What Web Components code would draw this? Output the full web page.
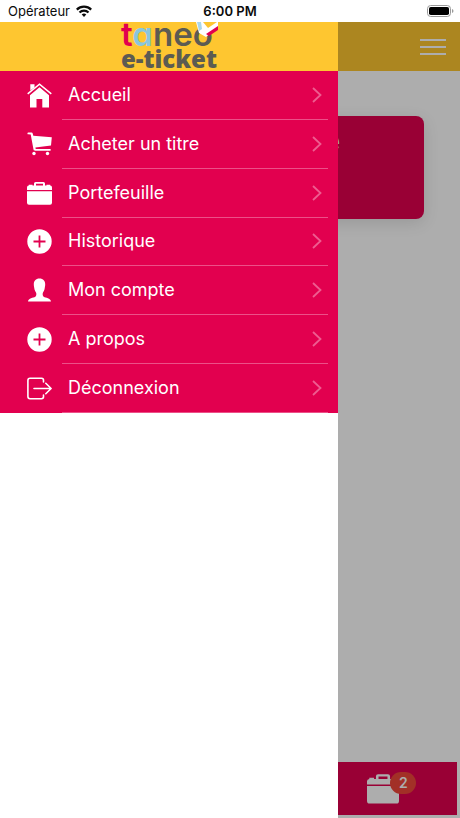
<!DOCTYPE html>
<html lang="fr">
<head>
<meta charset="utf-8">
<meta name="viewport" content="width=device-width, initial-scale=1">
<title>Taneo e-ticket</title>
<style>
  html, body {
    height: 100%;
    margin: 0;
  }
  body {
    font-family: Inter, "Liberation Sans", sans-serif;
    background: #ffffff;
    --brand: #e2004f;
    --yellow: #fec630;
    --ink: #5c5b52;
  }
</style>
</head>
<body>
<ticket-app>
  <status-bar slot="status" carrier="Opérateur" time="6:00 PM"></status-bar>
  <home-page slot="page"></home-page>
  <side-menu slot="menu">
    <menu-item icon="home">Accueil</menu-item>
    <menu-item icon="cart">Acheter un titre</menu-item>
    <menu-item icon="case">Portefeuille</menu-item>
    <menu-item icon="plus">Historique</menu-item>
    <menu-item icon="user">Mon compte</menu-item>
    <menu-item icon="plus">A propos</menu-item>
    <menu-item icon="exit">Déconnexion</menu-item>
  </side-menu>
</ticket-app>

<script>
const ICONS = {
  home: `<path fill="currentColor" d="M12.500 4.200 22 12.200V24.500h-6.700v-8.400h-5.800v8.400H3V12.200z"/>
    <path fill="currentColor" d="M3.300 7.500V1.300h4.200v3.100z"/>
    <path fill="none" stroke="currentColor" stroke-width="1.500" d="M.7 10.900 12.500 1.100l11.800 9.800"/>`,
  cart: `<path fill="currentColor" d="M.4 1.400C.4.800.8.600 1.300.600h3.200c.7 0 1.100.4 1.300 1.100l.5 2.100 18.500 1.400-.8 8.300-15.600 2.100.3 1.400h14.500c.8 0 .8 1.800 0 1.800H8c-.9 0-1.300-.4-1.500-1.200L3.700 2.500l-2.400-.2c-.6 0-.9-.4-.9-.9z"/>
    <circle cx="7" cy="21.500" r="1.700" fill="currentColor"/><circle cx="20.500" cy="21.500" r="1.700" fill="currentColor"/>`,
  case: `<path fill="currentColor" d="M0 9V6.500Q0 4.800 1.800 4.600V3.800h3.700v.8H7V2.600Q7 1 8.600 1h7.800Q18 1 18 2.600v2h1.500v-.8h3.700v.8Q25 4.800 25 6.500V9zM9 4.600h7V2.800H9z" fill-rule="evenodd"/>
    <path fill="currentColor" d="M0 10.200h25v11.600q0 2-2 2H2q-2 0-2-2z"/>`,
  plus: `<path fill="currentColor" fill-rule="evenodd" d="M12.500.3a12.200 12.200 0 1 0 0 24.400 12.200 12.200 0 0 0 0-24.400zM11.600 6.500h1.800v5.100h5.100v1.800h-5.100v5.100h-1.800v-5.100H6.500v-1.800h5.100z"/>`,
  user: `<path fill="currentColor" d="M12.500.6c3.800 0 5.700 2.400 5.700 5.800 0 1.300-.3 2-.4 3.400-.2 2.800-1.600 3.800-2 5.200-.3 1.400-.2 3 .9 3.700 2 1.200 6.900 1 7.300 4.900H1c.4-3.900 5.300-3.700 7.300-4.900 1.100-.7 1.200-2.300.9-3.700-.4-1.400-1.800-2.400-2-5.200-.1-1.400-.4-2.100-.4-3.400C6.800 3 8.700.6 12.500.6z"/>`,
  exit: `<path fill="none" stroke="currentColor" stroke-width="1.600" stroke-linecap="round" stroke-linejoin="round" d="M16.500 6V4.200q0-1.900-2-1.900H3Q.9 2.300.9 4.400v16.200q0 2.100 2.100 2.100h11.500q2 0 2-1.900V19M7 12.500h17M18.800 7.300l5.300 5.200-5.300 5.200"/>`
};

const drawIcon = (name) => `<svg viewBox="0 0 25 25" width="25" height="25" aria-hidden="true">${ICONS[name]}</svg>`;

class TicketApp extends HTMLElement {
  connectedCallback() {
    this.attachShadow({ mode: 'open' });
    this.shadowRoot.innerHTML = `
      <style>
        :host {
          display: flex;
          flex-direction: column;
          height: 100vh;
          overflow: hidden;
        }
        .stage {
          position: relative;
          flex: 1;
          min-height: 0;
          display: flex;
        }
        .page {
          flex: 1;
          display: flex;
        }
        .backdrop {
          position: absolute;
          inset: 0;
          background: rgba(0, 0, 0, 0.32);
        }
        .drawer {
          position: absolute;
          top: 0;
          bottom: 0;
          left: 0;
          display: flex;
          width: 338px;
          max-width: 80%;
        }
      </style>
      <slot name="status"></slot>
      <div class="stage">
        <div class="page"><slot name="page"></slot></div>
        <div class="backdrop"></div>
        <div class="drawer"><slot name="menu"></slot></div>
      </div>
    `;
  }
}

class StatusBar extends HTMLElement {
  connectedCallback() {
    this.attachShadow({ mode: 'open' });
    this.shadowRoot.innerHTML = `
      <style>
        :host {
          display: grid;
          grid-template-columns: 1fr auto 1fr;
          align-items: center;
          height: 22px;
          padding: 0 6px;
          background: #ffffff;
          color: #0b0b0b;
          font-size: 13px;
          line-height: 22px;
        }
        .left {
          display: flex;
          align-items: center;
          gap: 6px;
          padding-left: 2px;
        }
        .time {
          font-weight: 600;
        }
        .battery {
          justify-self: end;
        }
        svg {
          display: block;
        }
      </style>
      <div class="left">
        <span>${this.getAttribute('carrier')}</span>
        <svg width="16" height="12" viewBox="0 0 16 12" fill="none" stroke="#0b0b0b" aria-hidden="true">
          <path stroke-width="2.200" d="M.8 4.600a10.300 10.300 0 0 1 14.400 0"/>
          <path stroke-width="2.200" d="M3.500 7.500a6.400 6.400 0 0 1 9 0"/>
          <path fill="#0b0b0b" stroke="none" d="M5.700 9.500a3.300 3.300 0 0 1 4.600 0L8 11.900z"/>
        </svg>
      </div>
      <span class="time">${this.getAttribute('time')}</span>
      <svg class="battery" width="27" height="12" viewBox="0 0 27 12" aria-hidden="true">
        <rect x=".5" y=".5" width="23" height="11" rx="3.200" fill="none" stroke="#9a9a9a"/>
        <rect x="2" y="2" width="20" height="8" rx="1.800" fill="#000"/>
        <path d="M25 4v4q1.500-.6 1.500-2T25 4z" fill="#9a9a9a"/>
      </svg>
    `;
  }
}

class HomePage extends HTMLElement {
  connectedCallback() {
    this.attachShadow({ mode: 'open' });
    this.shadowRoot.innerHTML = `
      <style>
        :host {
          flex: 1;
          display: flex;
          flex-direction: column;
          background: #ffffff;
        }
        header {
          display: flex;
          justify-content: flex-end;
          align-items: center;
          height: 49px;
          padding-right: 14px;
          background: var(--yellow);
        }
        header button {
          display: grid;
          gap: 5px;
          width: 26px;
          padding: 0;
          border: 0;
          background: none;
        }
        header button i {
          height: 2px;
          background: #ffffff;
        }
        main {
          flex: 1;
          padding: 45px 36px;
        }
        .card {
          box-sizing: border-box;
          min-height: 103px;
          padding: 8px 0;
          border-radius: 8px;
          background: var(--brand);
          color: #ffffff;
          text-align: center;
          box-shadow: 0 4px 16px rgba(0, 0, 0, 0.12);
        }
        h2 {
          margin: 0;
          font-size: 29px;
          line-height: 34px;
          font-weight: 700;
        }
        nav {
          display: grid;
          grid-template-columns: repeat(3, 1fr);
          margin: 0 3px 3px;
          padding-left: 12px;
          background: var(--brand);
        }
        nav a {
          display: flex;
          justify-content: center;
          align-items: center;
          height: 53px;
          color: #ffffff;
        }
        .tab {
          position: relative;
          display: flex;
        }
        .tab svg {
          width: 32px;
          height: 32px;
        }
        .badge {
          position: absolute;
          top: -1px;
          left: 23px;
          width: 26px;
          border-radius: 11px;
          background: #ef473a;
          font-size: 14px;
          line-height: 22px;
          font-weight: 600;
          text-align: center;
        }
      </style>
      <header>
        <button type="button" aria-label="Menu"><i></i><i></i><i></i></button>
      </header>
      <main>
        <section class="card"><h2>Acheter un titre</h2></section>
      </main>
      <nav>
        <a href="#accueil" aria-label="Accueil"><span class="tab">${drawIcon('home')}</span></a>
        <a href="#acheter" aria-label="Acheter un titre"><span class="tab">${drawIcon('cart')}</span></a>
        <a href="#portefeuille" aria-label="Portefeuille"><span class="tab">${drawIcon('case')}<span class="badge">2</span></span></a>
      </nav>
    `;
  }
}

class TaneoLogo extends HTMLElement {
  connectedCallback() {
    this.attachShadow({ mode: 'open' });
    this.shadowRoot.innerHTML = `
      <style>
        :host {
          position: relative;
          display: flex;
          flex-direction: column;
          align-items: flex-start;
          color: var(--ink);
        }
        .name {
          font-size: 33px;
          line-height: 24px;
          font-weight: 600;
          font-feature-settings: "cv11";
        }
        .t { color: var(--brand); }
        .a { color: #8ac6dc; }
        .sub {
          font-family: "Open Sans", sans-serif;
          font-size: 24px;
          line-height: 25px;
          font-weight: 800;
        }
        svg {
          position: absolute;
          top: 0;
          right: -2px;
        }
      </style>
      <span class="name"><span class="t">t</span><span class="a">a</span>neo</span>
      <span class="sub">e-ticket</span>
      <svg width="24" height="18" viewBox="0 0 24 18" aria-hidden="true">
        <path fill="#ffffff" d="M1 0h22v5L11 15l-7-4z"/>
        <path fill="#a9d6ec" d="M2 0h4l1 7-3 2z"/>
        <path fill="#fec630" d="M8 0h14l-9 6z"/>
        <path fill="#e2004f" d="M23 4v4l-9 6-3-2z"/>
      </svg>
    `;
  }
}

class SideMenu extends HTMLElement {
  connectedCallback() {
    this.attachShadow({ mode: 'open' });
    this.shadowRoot.innerHTML = `
      <style>
        :host {
          flex: 1;
          display: flex;
          flex-direction: column;
          background: #ffffff;
        }
        header {
          display: flex;
          justify-content: center;
          align-items: flex-end;
          height: 49px;
          overflow: hidden;
          background: var(--yellow);
        }
        nav {
          display: grid;
          grid-auto-rows: 1fr;
          min-height: 342px;
          background: var(--brand);
        }
      </style>
      <header><taneo-logo></taneo-logo></header>
      <nav><slot></slot></nav>
    `;
  }
}

class MenuItem extends HTMLElement {
  connectedCallback() {
    this.attachShadow({ mode: 'open' });
    this.shadowRoot.innerHTML = `
      <style>
        :host {
          display: flex;
          color: #ffffff;
        }
        a {
          flex: 1;
          display: flex;
          padding-left: 27px;
          color: inherit;
          text-decoration: none;
        }
        .icon {
          display: flex;
          align-items: center;
          width: 35px;
        }
        .body {
          flex: 1;
          display: flex;
          align-items: center;
          justify-content: space-between;
          margin-right: 10px;
          padding: 0 6px;
          border-bottom: 1px solid #ec5088;
          font-size: 18px;
          line-height: 24px;
        }
      </style>
      <a href="#">
        <span class="icon">${drawIcon(this.getAttribute('icon'))}</span>
        <span class="body">
          <slot></slot>
          <svg width="10" height="16" viewBox="0 0 10 16" fill="none" stroke="#ee5c90" stroke-width="1.800" aria-hidden="true"><path d="M1 1l7.500 7L1 15"/></svg>
        </span>
      </a>
    `;
  }
}

customElements.define('ticket-app', TicketApp);
customElements.define('status-bar', StatusBar);
customElements.define('home-page', HomePage);
customElements.define('taneo-logo', TaneoLogo);
customElements.define('side-menu', SideMenu);
customElements.define('menu-item', MenuItem);
</script>
</body>
</html>
